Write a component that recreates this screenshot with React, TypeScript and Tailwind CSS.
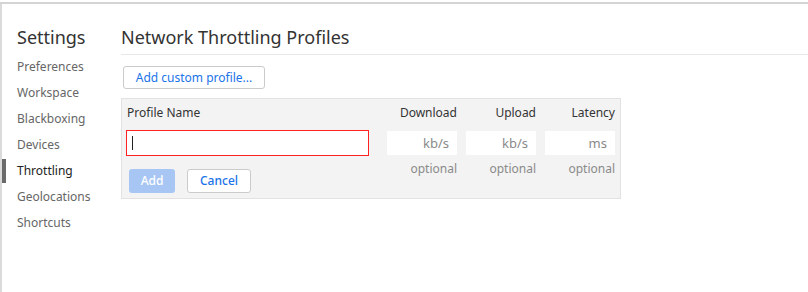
import { useState } from "react";

const pages = ["Preferences", "Workspace", "Blackboxing", "Devices", "Throttling", "Geolocations", "Shortcuts"];

const font = { fontFamily: '"Noto Sans", "DejaVu Sans", sans-serif' };

function NumberField({ unit }: { unit: string }) {
    return (
        <div className="flex flex-col items-end w-[70px]">
            <input
                className="w-[70px] h-[24px] bg-white text-right pr-[8px] text-[13px] outline-none placeholder:text-[#8a8a8a]"
                placeholder={unit}
            />
            <span className="mt-[3px] h-[22px] leading-[22px] text-[12px] text-[#8a8a8a]">optional</span>
        </div>
    );
}

export default function App() {
    const [name, setName] = useState("");
    const [selected] = useState("Throttling");

    return (
        <div className="w-[808px] h-[292px] bg-white pt-[2px]" style={font}>
            <div className="h-full border-t-[2px] border-[#d4d4d4] flex">
                <div className="w-[2px] h-full bg-[#dadada]" />
                <div className="w-[117px] shrink-0 pt-[21px]">
                    <h1 className="pl-[15px] text-[18px] leading-[24px] text-[#333]">Settings</h1>
                    <ul className="mt-[5px]">
                        {pages.map(p => (
                            <li key={p} className="flex h-[26px] items-center">
                                <span className={"w-[4px] h-[24px] " + (p === selected ? "bg-[#6a6a6a]" : "")} />
                                <span className={"pl-[11px] text-[12px] " + (p === selected ? "text-[#222]" : "text-[#666]")}>{p}</span>
                            </li>
                        ))}
                    </ul>
                </div>
                <div className="flex-1 pt-[21px]">
                    <h2 className="ml-[2px] text-[18px] leading-[24px] text-[#333] pb-[5px] border-b border-[#e8e8e8]">
                        Network Throttling Profiles
                    </h2>
                    <button className="ml-[4px] mt-[11px] h-[23px] w-[142px] rounded-[3px] border border-[#cbcbcb] text-[12px] text-[#1a73e8] bg-white">
                        Add custom profile...
                    </button>
                    <div className="ml-[2px] mt-[9px] w-[500px] h-[101px] bg-[#f3f3f3] border border-[#e2e2e2] pt-[4px] px-[4px]">
                        <div className="flex gap-[9px]">
                            <div className="w-[243px] flex flex-col">
                                <span className="h-[19px] leading-[19px] text-[12px] text-[#333] pl-[1px]">Profile Name</span>
                                <div className="relative mt-[8px]">
                                    <input
                                        value={name}
                                        onChange={e => setName(e.target.value)}
                                        className="w-full h-[26px] border border-[#f22] bg-white outline-none px-[6px] text-[13px]"
                                    />
                                    {name === "" && <span className="absolute left-[6px] top-[6px] w-px h-[14px] bg-[#222]" />}
                                </div>
                                <div className="mt-[13px] flex gap-[12px] pl-[3px]">
                                    <button className="h-[24px] w-[46px] rounded-[3px] bg-[#a7c6f3] text-white text-[12px] font-medium">Add</button>
                                    <button className="h-[24px] w-[64px] rounded-[3px] border border-[#cbcbcb] bg-white text-[#1a73e8] text-[12px] font-medium">Cancel</button>
                                </div>
                            </div>
                            <div className="flex gap-[9px] pl-[9px]">
                                {[["Download", "kb/s"], ["Upload", "kb/s"], ["Latency", "ms"]].map(([h, u]) => (
                                    <div key={h} className="flex flex-col items-end">
                                        <span className="h-[19px] leading-[19px] text-[12px] text-[#333]">{h}</span>
                                        <div className="mt-[9px]"><NumberField unit={u} /></div>
                                    </div>
                                ))}
                            </div>
                        </div>
                    </div>
                </div>
            </div>
        </div>
    );
}
